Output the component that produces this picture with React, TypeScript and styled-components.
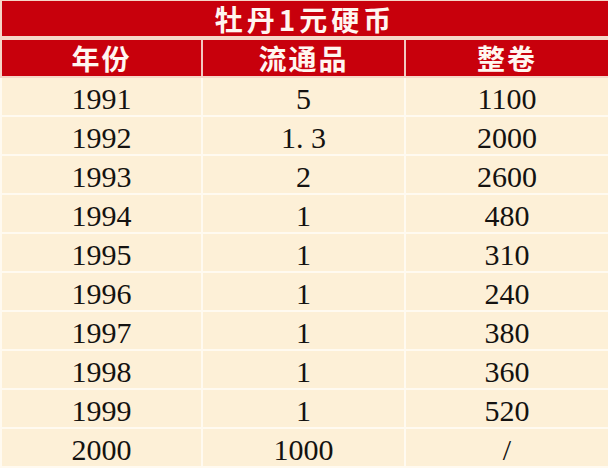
import React from "react";
import styled, { createGlobalStyle } from "styled-components";

const Global = createGlobalStyle`
  html, body { margin: 0; padding: 0; background: #fdf0d7; }
  #root { width: 608px; height: 468px; overflow: hidden; }
`;

const Table = styled.div`
  width: 608px;
  height: 468px;
  display: flex;
  flex-direction: column;
  background: #f6d6c8;
  padding: 1px 0 0 2px;
  box-sizing: border-box;
`;

const Title = styled.div`
  height: 35px;
  background: #c8000c;
  color: #fff6f0;
  display: flex;
  align-items: center;
  justify-content: center;
  font-family: "Noto Sans CJK SC", sans-serif;
  font-weight: 700;
  font-size: 28px;
  line-height: 1;
  letter-spacing: 4px;
  margin-bottom: 4px;
  padding-top: 1px;
  box-sizing: border-box;
`;

const HeaderRow = styled.div`
  display: grid;
  grid-template-columns: 199px 201px 1fr;
  column-gap: 2px;
  background: #f2c8c0;
  height: 36px;
  margin-bottom: 2px;
`;

const HeadCell = styled.div`
  background: #c8000c;
  color: #fff6f0;
  display: flex;
  align-items: center;
  justify-content: center;
  font-family: "Noto Sans CJK SC", sans-serif;
  font-weight: 700;
  font-size: 28px;
  line-height: 1;
  letter-spacing: 2px;
`;

const Body = styled.div`
  flex: 1;
  display: grid;
  grid-template-columns: 199px 201px 1fr;
  grid-auto-rows: 37px;
  gap: 2px;
  background: #fffaf0;
  margin-left: -2px;
  padding-left: 2px;
`;

const Cell = styled.div`
  background: #fdf0d7;
  color: #141210;
  display: flex;
  align-items: center;
  justify-content: center;
  padding-top: 4px;
  box-sizing: border-box;
  font-family: "Liberation Serif", "DejaVu Serif", serif;
  font-size: 30px;
  line-height: 1;
`;

const rows: [string, string, string][] = [
  ["1991", "5", "1100"],
  ["1992", "1. 3", "2000"],
  ["1993", "2", "2600"],
  ["1994", "1", "480"],
  ["1995", "1", "310"],
  ["1996", "1", "240"],
  ["1997", "1", "380"],
  ["1998", "1", "360"],
  ["1999", "1", "520"],
  ["2000", "1000", "/"],
];

export default function App() {
  return (
    <>
      <Global />
      <Table>
        <Title>牡丹1元硬币</Title>
        <HeaderRow>
          <HeadCell>年份</HeadCell>
          <HeadCell>流通品</HeadCell>
          <HeadCell>整卷</HeadCell>
        </HeaderRow>
        <Body>
          {rows.map((r) =>
            r.map((v, i) => <Cell key={r[0] + i}>{v}</Cell>)
          )}
        </Body>
      </Table>
    </>
  );
}
